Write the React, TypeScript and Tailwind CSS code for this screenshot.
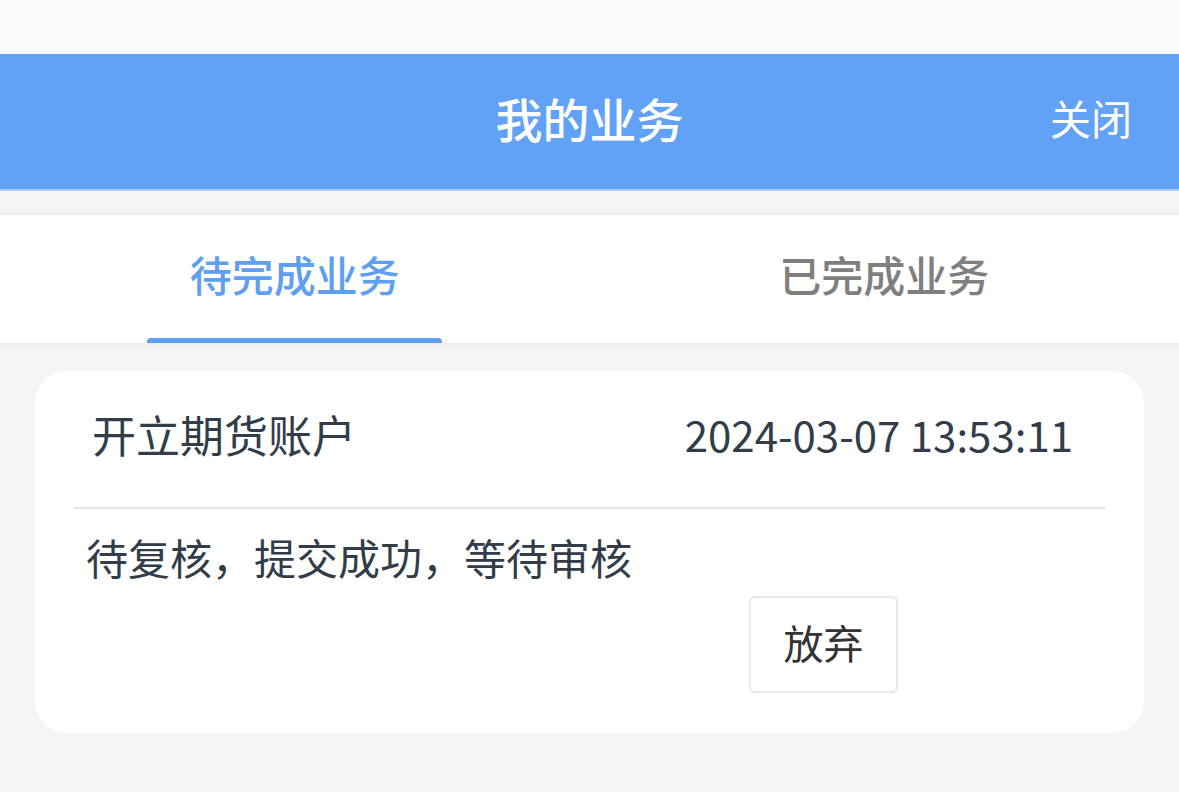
import React, { useState } from "react";

const tabs = ["待完成业务", "已完成业务"];

export default function App() {
  const [active, setActive] = useState(0);

  return (
    <div
      className="min-h-screen bg-[#f5f5f5] pb-10"
      style={{ fontFamily: '"Noto Sans CJK SC", "Noto Sans", sans-serif' }}
    >
      {/* status bar area */}
      <div className="h-[54px] bg-[#fbfbfb]" />

      {/* Header */}
      <div className="grid h-[137px] grid-cols-[1fr_auto_1fr] items-center border-b-2 border-[#a8cbf7] bg-[#62a2f6] pb-[9px] text-white">
        <div />
        <h1 className="text-[47px] font-medium leading-none">我的业务</h1>
        <div className="flex justify-end pr-[47px]">
          <button className="text-[41px] leading-none">关闭</button>
        </div>
      </div>

      <div className="h-[22px]" />

      {/* Tabs */}
      <div className="grid h-[132px] grid-cols-2 border-y-2 border-[#ececec] bg-white">
        {tabs.map((t, i) => (
          <button
            key={t}
            onClick={() => setActive(i)}
            className={`relative flex items-center justify-center pb-[10px] text-[42px] font-medium leading-none ${
              active === i ? "text-[#5f9ff1]" : "text-[#7f7f7f]"
            }`}
          >
            {t}
            {active === i && (
              <span className="absolute bottom-0 left-1/4 h-[5px] w-1/2 rounded-t-[4px] bg-[#5f9ff1]" />
            )}
          </button>
        ))}
      </div>

      {/* Card */}
      <div className="mx-[35px] mt-[26px] rounded-[32px] bg-white pb-[40px]">
        <div className="flex h-[136px] items-center justify-between pb-[10px] pl-[57px] pr-[71px] text-[#333c49]">
          <span className="text-[44px] leading-none">开立期货账户</span>
          <span className="text-[42px] leading-none">2024-03-07 13:53:11</span>
        </div>
        <div className="mx-[39px] h-[2px] bg-[#e9e3e3]" />
        <p className="pl-[51px] pt-[27px] text-[42px] leading-none text-[#333c49]">
          待复核，提交成功，等待审核
        </p>
        <div className="flex pl-[714px] pt-[18px]">
          <button className="flex h-[97px] w-[149px] items-center justify-center rounded-[6px] border-2 border-[#e8e9ec] pb-[6px] text-[40px] leading-none text-[#333]">
            放弃
          </button>
        </div>
      </div>
    </div>
  );
}
